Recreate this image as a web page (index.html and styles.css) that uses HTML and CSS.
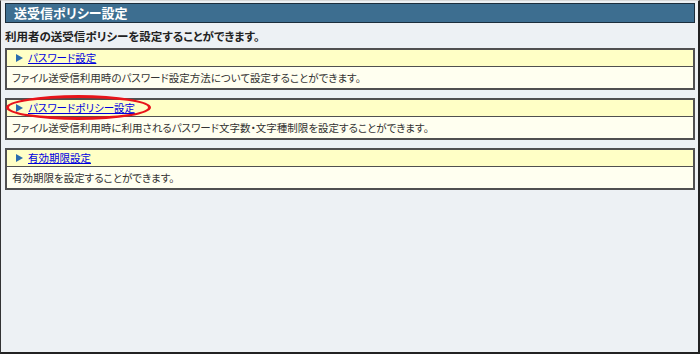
FILE: index.html
```html
<!DOCTYPE html>
<html lang="ja">
<head>
  <meta charset="UTF-8">
  <title>送受信ポリシー設定</title>
  <link rel="stylesheet" href="styles.css">
</head>
<body>
  <div class="frame">
    <h1 class="title">送受信ポリシー設定</h1>
    <p class="lead">利用者の送受信ポリシーを設定することができます。</p>

    <div class="item">
      <div class="item-head"><span class="arrow"></span><a href="#">パスワード設定</a></div>
      <div class="item-body">ファイル送受信利用時のパスワード設定方法について設定することができます。</div>
    </div>

    <div class="item marked">
      <div class="item-head"><span class="arrow"></span><a href="#">パスワードポリシー設定</a></div>
      <div class="item-body">ファイル送受信利用時に利用されるパスワード文字数・文字種制限を設定することができます。</div>
      <div class="circle"></div>
    </div>

    <div class="item">
      <div class="item-head"><span class="arrow"></span><a href="#">有効期限設定</a></div>
      <div class="item-body">有効期限を設定することができます。</div>
    </div>
  </div>
</body>
</html>
```

FILE: styles.css
```css
* {
    margin: 0;
    padding: 0;
    box-sizing: border-box;
}
body {
    font-family: "Noto Sans CJK JP", "Liberation Sans", sans-serif;
    font-feature-settings: "palt";
    font-size: 10.5px;
    color: #222;
    background: #fff;
}
.frame {
    width: 700px;
    height: 354px;
    background: #edf1f4;
    border-top: 1px solid #d8d8d8;
    border-left: 1px solid #333;
    border-right: 2px solid #222;
    border-bottom: 2px solid #222;
    padding: 2px 3px 0 4px;
}
.title {
    height: 20px;
    background: #3d6e90;
    border: 1px solid #1c2e3c;
    color: #fff;
    font-size: 13px;
    font-weight: bold;
    line-height: 18px;
    padding-left: 8px;
}
.lead {
    font-weight: bold;
    font-size: 11.5px;
    line-height: 16px;
    margin: 5px 0 4px 0;
}
.item {
    position: relative;
    border: 2px solid #505050;
    margin-bottom: 8px;
    background: #fffff0;
}
.item-head {
    height: 17px;
    background: #ffffc6;
    border-bottom: 1px solid #505050;
    display: flex;
    align-items: center;
    padding-left: 9px;
    line-height: 16px;
}
.arrow {
    width: 0;
    height: 0;
    border-style: solid;
    border-width: 4px 0 4px 7px;
    border-color: transparent transparent transparent #2a6cae;
    margin-right: 5px;
}
.item-head a {
    color: #0000e0;
    text-decoration: underline;
}
.item-body {
    height: 21px;
    line-height: 21px;
    padding-left: 5px;
    color: #333;
}
.circle {
    position: absolute;
    left: -1px;
    top: -5px;
    width: 145px;
    height: 25px;
    border: 3px solid #e8141a;
    border-radius: 50%;
}
```
